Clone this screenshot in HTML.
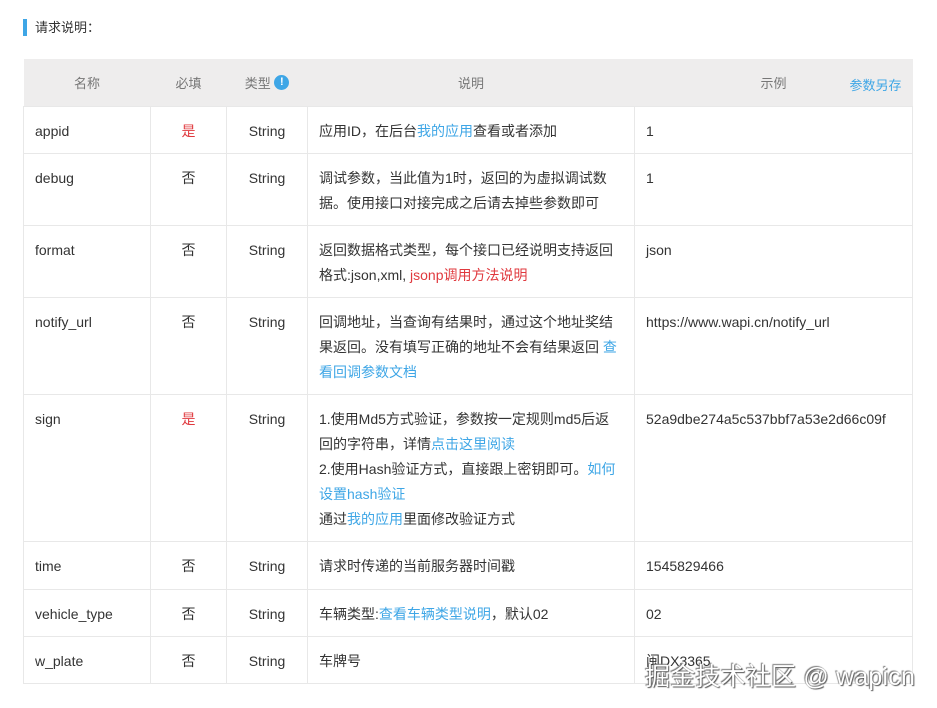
<!DOCTYPE html>
<html><head><meta charset="utf-8"><style>
*{margin:0;padding:0;box-sizing:border-box}
body{width:937px;height:708px;background:#fff;font-family:"Liberation Sans","Noto Sans CJK SC",sans-serif;font-size:14px;color:#333;position:relative;overflow:hidden}
.title{position:absolute;left:23px;top:19px;height:17px;border-left:4px solid #3ea6e6;padding-left:8px;font-size:13px;line-height:17px;color:#333}
table{position:absolute;left:23px;top:59px;width:889px;border-collapse:collapse;table-layout:fixed}
th{background:#eeeded;height:47px;font-weight:normal;color:#777;font-size:13px;border:none}
td{border:1px solid #e8e8e8;padding:12px 11px 9px;line-height:25px;vertical-align:top;white-space:nowrap}
td.c{text-align:center}
.r{color:#e0393e}
a{color:#3ea6e6;text-decoration:none}
.red{color:#e0393e}
.i{display:inline-block;width:15px;height:15px;border-radius:50%;background:#3ea6e6;color:#fff;font-size:11px;line-height:15px;text-align:center;font-weight:bold;vertical-align:3px}
.wm{position:absolute;left:645px;top:657px;font-size:25px;white-space:nowrap;color:#fff;text-shadow:1px 1px 1px #555,-1px -1px 1px #777;letter-spacing:0.2px}
</style></head><body>
<div class="title">请求说明：</div>
<table>
<colgroup><col style="width:127px"><col style="width:76px"><col style="width:81px"><col style="width:327px"><col style="width:278px"></colgroup>
<tr><th>名称</th><th>必填</th><th>类型 <span class="i">!</span></th><th>说明</th><th style="position:relative">示例<a style="position:absolute;right:11px;top:16px">参数另存</a></th></tr>
<tr><td>appid</td><td class="c r">是</td><td class="c">String</td><td>应用ID，在后台<a>我的应用</a>查看或者添加</td><td>1</td></tr>
<tr><td>debug</td><td class="c">否</td><td class="c">String</td><td>调试参数，当此值为1时，返回的为虚拟调试数<br>据。使用接口对接完成之后请去掉些参数即可</td><td>1</td></tr>
<tr><td>format</td><td class="c">否</td><td class="c">String</td><td>返回数据格式类型，每个接口已经说明支持返回<br>格式:json,xml, <span class="red">jsonp调用方法说明</span></td><td>json</td></tr>
<tr><td>notify_url</td><td class="c">否</td><td class="c">String</td><td>回调地址，当查询有结果时，通过这个地址奖结<br>果返回。没有填写正确的地址不会有结果返回 <a>查</a><br><a>看回调参数文档</a></td><td>https://www.wapi.cn/notify_url</td></tr>
<tr><td>sign</td><td class="c r">是</td><td class="c">String</td><td>1.使用Md5方式验证，参数按一定规则md5后返<br>回的字符串，详情<a>点击这里阅读</a><br>2.使用Hash验证方式，直接跟上密钥即可。<a>如何</a><br><a>设置hash验证</a><br>通过<a>我的应用</a>里面修改验证方式</td><td style="overflow:hidden">52a9dbe274a5c537bbf7a53e2d66c09f</td></tr>
<tr style="height:48px"><td>time</td><td class="c">否</td><td class="c">String</td><td>请求时传递的当前服务器时间戳</td><td>1545829466</td></tr>
<tr><td>vehicle_type</td><td class="c">否</td><td class="c">String</td><td>车辆类型:<a>查看车辆类型说明</a>，默认02</td><td>02</td></tr>
<tr><td>w_plate</td><td class="c">否</td><td class="c">String</td><td>车牌号</td><td>闽DX3365</td></tr>
</table>
<div class="wm">掘金技术社区 @ wapicn</div>
</body></html>
